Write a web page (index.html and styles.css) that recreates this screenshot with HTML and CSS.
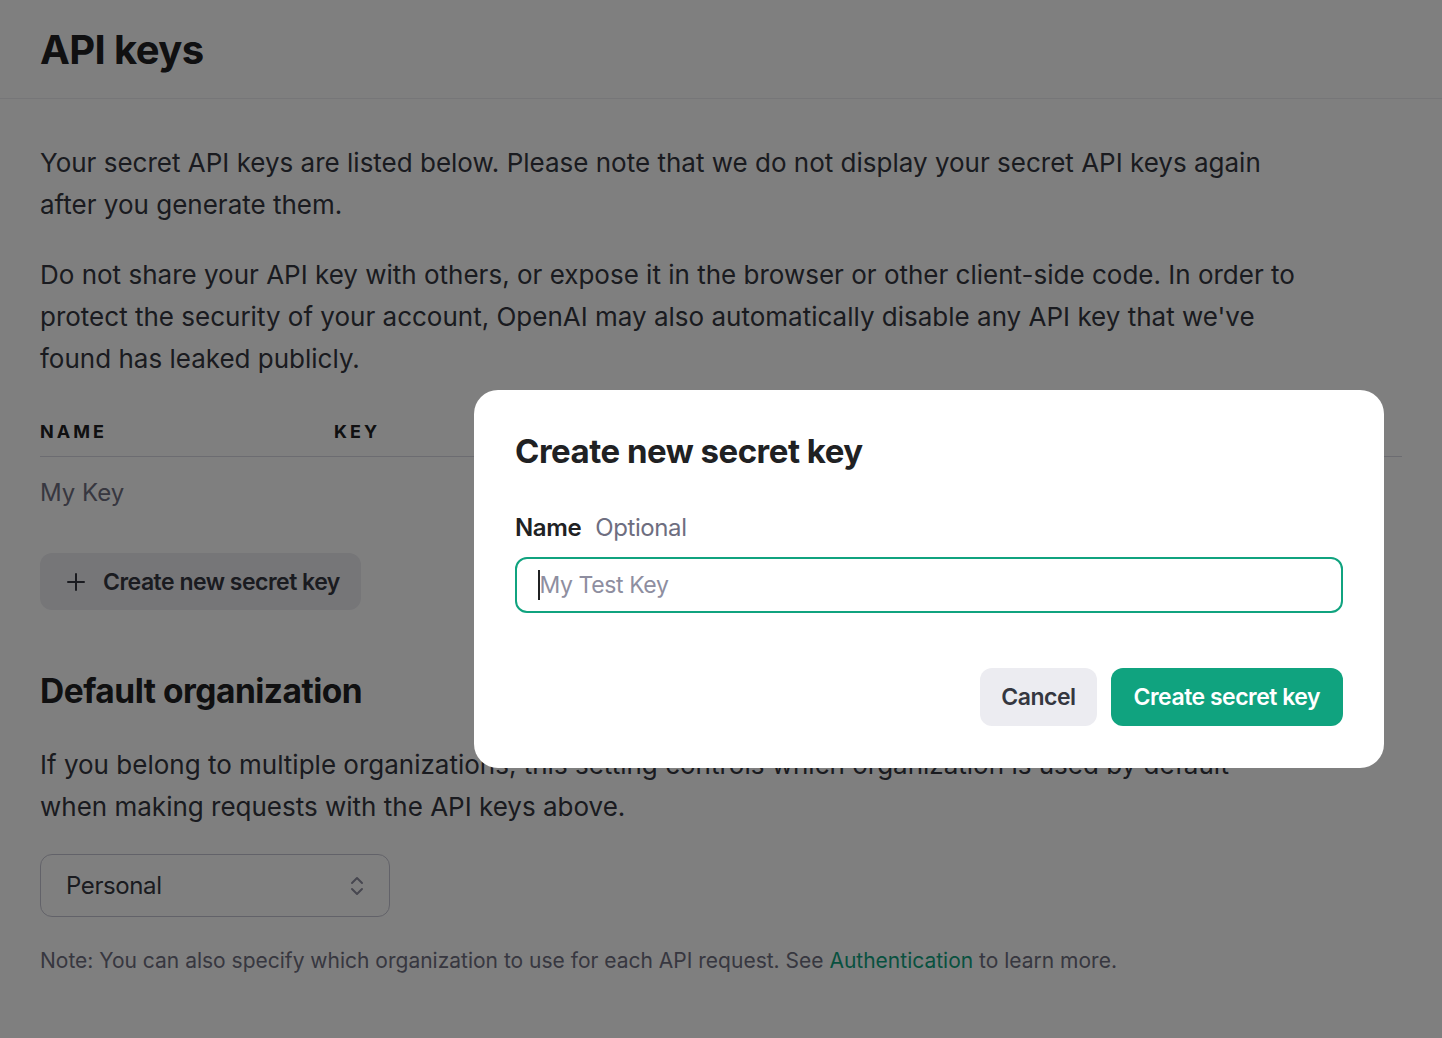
FILE: index.html
```html
<!DOCTYPE html>
<html lang="en">
<head>
<meta charset="utf-8">
<title>API keys</title>
<link rel="stylesheet" href="styles.css">
</head>
<body>
<div class="page">
  <header class="page-header">
    <h1 class="page-title">API keys</h1>
  </header>
  <main class="content">
    <p class="para">Your secret API keys are listed below. Please note that we do not display your secret API keys again after you generate them.</p>
    <p class="para">Do not share your API key with others, or expose it in the browser or other client-side code. In order to protect the security of your account, OpenAI may also automatically disable any API key that we've found has leaked publicly.</p>
    <div class="table">
      <div class="table-head">
        <span class="col-name">NAME</span>
        <span class="col-key">KEY</span>
      </div>
      <div class="table-row">
        <span class="col-name row-name">My Key</span>
      </div>
    </div>
    <button class="btn-secondary" type="button">
      <svg class="plus" width="20" height="20" viewBox="0 0 20 20" fill="none" stroke="currentColor" stroke-width="2" stroke-linecap="round"><path d="M10 2v16M2 10h16"/></svg>
      <span>Create new secret key</span>
    </button>
    <h2 class="section-title">Default organization</h2>
    <p class="para">If you belong to multiple organizations, this setting controls which organization is used by default when making requests with the API keys above.</p>
    <div class="select">
      <span>Personal</span>
      <svg class="chev" width="14" height="22" viewBox="0 0 14 22" fill="none" stroke="currentColor" stroke-width="2" stroke-linecap="round" stroke-linejoin="round"><path d="M2 8l5-5 5 5M2 14l5 5 5-5"/></svg>
    </div>
    <p class="note">Note: You can also specify which organization to use for each API request. See <a class="link" href="#">Authentication</a> to learn more.</p>
  </main>
</div>
<div class="overlay"></div>
<div class="modal" role="dialog">
  <h2 class="modal-title">Create new secret key</h2>
  <div class="field-label"><span class="label-strong">Name</span><span class="label-opt">Optional</span></div>
  <div class="input"><span class="caret"></span><span class="placeholder">My Test Key</span></div>
  <div class="modal-actions">
    <button class="btn-cancel" type="button">Cancel</button>
    <button class="btn-primary" type="button">Create secret key</button>
  </div>
</div>
</body>
</html>
```
FILE: styles.css
```css
* { box-sizing: border-box; }
html, body { margin: 0; padding: 0; }
body {
  background: #ffffff;
  font-family: "Inter", "Liberation Sans", sans-serif;
  color: #353740;
  width: 1442px;
  height: 1038px;
  overflow: hidden;
}
.page-header {
  height: 99px;
  border-bottom: 1px solid #ececf1;
  padding: 0 40px;
  display: flex;
  align-items: center;
}
.page-title {
  margin: 0;
  font-size: 40px;
  font-weight: 700;
  color: #202123;
  letter-spacing: -0.6px;
  line-height: 1;
  padding-top: 2px;
}
.content { padding: 43px 40px 0; }
.para {
  margin: 0 0 28px;
  font-size: 26px;
  line-height: 42px;
  max-width: 1258px;
  letter-spacing: 0;
}
.table { margin-top: 41px; }
.table-head {
  display: flex;
  border-bottom: 1px solid #d9d9e3;
  height: 36px;
  align-items: flex-start;
  font-size: 18px;
  font-weight: 700;
  letter-spacing: 3px;
  color: #202123;
}
.col-name { width: 294px; }
.table-row {
  height: 72px;
  display: flex;
  align-items: center;
}
.row-name { font-size: 24px; color: #6e6e80; letter-spacing: 0; padding-bottom: 2px; }
.btn-secondary {
  margin-top: 24px;
  display: inline-flex;
  align-items: center;
  gap: 17px;
  height: 57px;
  padding: 0 21px 0 26px;
  border: none;
  border-radius: 12px;
  background: #ececf1;
  color: #353740;
  font-family: inherit;
  font-size: 23px;
  font-weight: 600;
  letter-spacing: -0.5px;
}
.plus { width: 20px; height: 20px; }
.section-title {
  margin: 60px 0 0;
  font-size: 33.5px;
  font-weight: 700;
  color: #202123;
  letter-spacing: -0.5px;
  line-height: 42px;
}
.section-title + .para { margin-top: 32px; margin-bottom: 26px; }
.select {
  width: 350px;
  height: 63px;
  border: 1px solid #c5c5d2;
  border-radius: 12px;
  display: flex;
  align-items: center;
  justify-content: space-between;
  padding: 0 25px 0 25px;
  font-size: 24px;
  color: #353740;
  letter-spacing: -0.4px;
}
.chev { color: #8e8ea0; }
.note {
  margin: 30px 0 0;
  font-size: 21px;
  line-height: 28px;
  letter-spacing: 0;
  color: #6e6e80;
}
.link { color: #10a37f; text-decoration: none; }
.overlay {
  position: fixed;
  inset: 0;
  background: rgba(0, 0, 0, 0.5);
}
.modal {
  position: fixed;
  left: 474px;
  top: 390px;
  width: 910px;
  height: 378px;
  background: #ffffff;
  border-radius: 24px;
  padding: 38px 41px 0 41px;
  display: flex;
  flex-direction: column;
}
.modal-title {
  margin: 0;
  font-size: 33px;
  font-weight: 700;
  color: #202123;
  letter-spacing: -0.5px;
  line-height: 46px;
}
.field-label {
  margin-top: 37px;
  display: flex;
  gap: 14px;
  font-size: 24px;
  line-height: 34px;
  letter-spacing: -0.4px;
}
.label-strong { font-weight: 600; color: #202123; }
.label-opt { color: #6e6e80; }
.input {
  margin-top: 12px;
  height: 56px;
  border: 2.5px solid #10a37f;
  border-radius: 12px;
  display: flex;
  align-items: center;
  padding-left: 21px;
  font-size: 23px;
  letter-spacing: -0.4px;
}
.caret { width: 1.5px; height: 30px; background: #202123; }
.placeholder { color: #8e8ea0; }
.modal-actions {
  margin-top: 55px;
  display: flex;
  justify-content: flex-end;
  gap: 14px;
}
.btn-cancel, .btn-primary {
  height: 58px;
  border: none;
  border-radius: 12px;
  font-family: inherit;
  font-size: 23px;
  font-weight: 600;
  letter-spacing: -0.5px;
  padding: 0 21px;
}
.btn-cancel { background: #ececf1; color: #353740; }
.btn-primary { background: #10a37f; color: #ffffff; padding: 0 23px; }
```
